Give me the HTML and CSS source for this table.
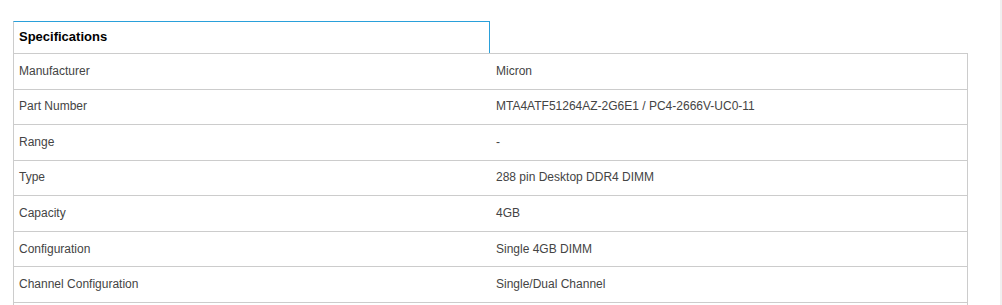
FILE: index.html
```html
<!DOCTYPE html>
<html lang="en">
<head>
    <meta charset="UTF-8">
    <meta name="viewport" content="width=device-width, initial-scale=1.0">
    <title>Specifications</title>
    <link rel="stylesheet" href="styles.css">
</head>
<body>
    <div class="page">
        <div class="specs">
            <div class="tab">Specifications</div>
            <table class="spec-table">
                <tr><td>Manufacturer</td><td>Micron</td></tr>
                <tr><td>Part Number</td><td>MTA4ATF51264AZ-2G6E1 / PC4-2666V-UC0-11</td></tr>
                <tr><td>Range</td><td>-</td></tr>
                <tr><td>Type</td><td>288 pin Desktop DDR4 DIMM</td></tr>
                <tr><td>Capacity</td><td>4GB</td></tr>
                <tr><td>Configuration</td><td>Single 4GB DIMM</td></tr>
                <tr><td>Channel Configuration</td><td>Single/Dual Channel</td></tr>
                <tr><td></td><td></td></tr>
            </table>
        </div>
        <div class="scroll-strip"></div>
    </div>
</body>
</html>
```

FILE: styles.css
```css
body {
    margin: 0;
    background: #fff;
    font-family: 'Liberation Sans', Arial, sans-serif;
    overflow: hidden;
}

.page {
    display: flex;
    height: 100vh;
}

.specs {
    flex: 1;
    padding: 21px 0 0 13px;
}

.tab {
    width: 470px;
    height: 31px;
    line-height: 30px;
    padding-left: 5px;
    border-top: 1px solid #2aa0da;
    border-right: 1px solid #2aa0da;
    border-left: 1px solid #ccc;
    font-size: 13px;
    font-weight: bold;
    color: #000;
}

.spec-table {
    width: 955px;
    border-collapse: collapse;
    border: 1px solid #ccc;
    font-size: 12px;
    color: #444;
}

.spec-table tr {
    height: 35.57px;
}

.spec-table td {
    border-bottom: 1px solid #ccc;
    padding: 0 6px 1px;
    vertical-align: middle;
}

.spec-table td:first-child {
    width: 465px;
    padding-left: 5px;
}

.scroll-strip {
    width: 2px;
    background: #f0f0f0;
}
```
